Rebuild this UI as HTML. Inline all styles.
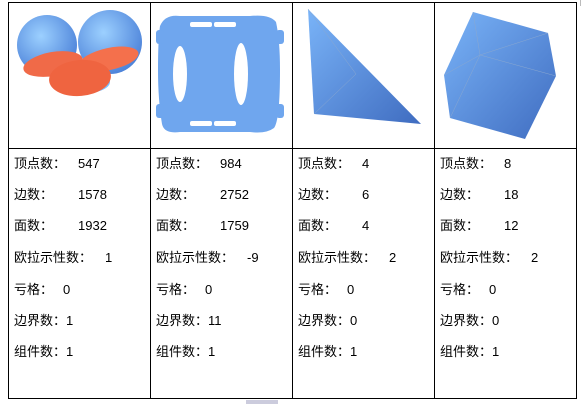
<!DOCTYPE html><html><head><meta charset="utf-8"><style>
body{margin:0;width:581px;height:404px;background:#fff;position:relative;overflow:hidden;font-family:"Liberation Sans","Noto Sans CJK SC",sans-serif;font-size:13px;color:#000}
.l{position:absolute;background:#000}
.t{position:absolute;white-space:nowrap;line-height:14px}
</style></head><body>
<div class="l" style="left:8px;top:2px;width:569px;height:1px"></div>
<div class="l" style="left:8px;top:148px;width:569px;height:1px"></div>
<div class="l" style="left:8px;top:398px;width:569px;height:1px"></div>
<div class="l" style="left:8px;top:2px;width:1px;height:397px"></div>
<div class="l" style="left:150px;top:2px;width:1px;height:397px"></div>
<div class="l" style="left:292px;top:2px;width:1px;height:397px"></div>
<div class="l" style="left:434px;top:2px;width:1px;height:397px"></div>
<div class="l" style="left:576px;top:2px;width:1px;height:397px"></div>
<div style="position:absolute;left:580px;top:0;width:1px;height:6px;background:#bbb"></div>
<div style="position:absolute;left:246px;top:400px;width:32px;height:4px;background:#ccd"></div>
<svg width="581" height="148" style="position:absolute;left:0;top:0">
<defs>
<radialGradient id="b" cx="40%" cy="35%" r="70%"><stop offset="0" stop-color="#9cd0ff"/><stop offset="1" stop-color="#4a80d8"/></radialGradient>
<linearGradient id="p" x1="0" y1="0" x2="1" y2="1"><stop offset="0" stop-color="#7ab4f8"/><stop offset="1" stop-color="#3f6cc0"/></linearGradient>
</defs>
<circle cx="47" cy="45" r="30" fill="url(#b)"/><circle cx="110" cy="42" r="32" fill="url(#b)"/>
<ellipse cx="80" cy="82" rx="30" ry="12" fill="#7cc0ff"/>
<ellipse cx="53" cy="64" rx="30" ry="12" fill="#f06a48" transform="rotate(-10 53 64)"/>
<ellipse cx="109" cy="59" rx="30" ry="11" fill="#f4704c" transform="rotate(-12 109 59)"/>
<ellipse cx="80" cy="78" rx="31" ry="18" fill="#ef6440" transform="rotate(-5 80 78)"/>
<path d="M160 26 Q165 14 180 16 L250 16 Q270 14 276 22 Q280 40 280 70 Q280 120 274 128 Q266 134 250 132 L180 132 Q164 134 162 124 Q158 100 158 70 Q158 40 160 26Z" fill="#6fa6ee"/>
<rect x="156" y="30" width="8" height="14" rx="3" fill="#6fa6ee"/><rect x="156" y="104" width="8" height="14" rx="3" fill="#6fa6ee"/>
<rect x="276" y="30" width="8" height="14" rx="3" fill="#6fa6ee"/><rect x="276" y="104" width="8" height="14" rx="3" fill="#6fa6ee"/>
<ellipse cx="180" cy="74" rx="7" ry="28" fill="#fff"/><ellipse cx="241" cy="74" rx="7" ry="31" fill="#fff"/>
<rect x="190" y="22" width="22" height="5" rx="2" fill="#fff"/><rect x="214" y="22" width="22" height="5" rx="2" fill="#fff"/>
<rect x="190" y="121" width="22" height="5" rx="2" fill="#fff"/><rect x="214" y="121" width="22" height="5" rx="2" fill="#fff"/>
<polygon points="308,9 421,124 314,114" fill="url(#p)"/>
<polygon points="473,12 548,33 556,76 525,139 450,118 444,75" fill="url(#p)"/>
<g stroke="#8aa8d0" stroke-width="0.5" fill="none"><path d="M480 55 L473 12 M480 55 L548 33 M480 55 L556 76 M480 55 L450 118 M480 55 L444 75"/><path d="M356 74 L314 114 M356 74 L308 9"/></g>
</svg>
<div class="t" style="left:14px;top:157px">顶点数：</div><div class="t" style="left:78px;top:157px">547</div>
<div class="t" style="left:14px;top:188px">边数：</div><div class="t" style="left:78px;top:188px">1578</div>
<div class="t" style="left:14px;top:219px">面数：</div><div class="t" style="left:78px;top:219px">1932</div>
<div class="t" style="left:14px;top:251px">欧拉示性数：</div><div class="t" style="left:105px;top:251px">1</div>
<div class="t" style="left:14px;top:283px">亏格：</div><div class="t" style="left:63px;top:283px">0</div>
<div class="t" style="left:14px;top:314px">边界数：1</div>
<div class="t" style="left:14px;top:345px">组件数：1</div>

<div class="t" style="left:156px;top:157px">顶点数：</div><div class="t" style="left:220px;top:157px">984</div>
<div class="t" style="left:156px;top:188px">边数：</div><div class="t" style="left:220px;top:188px">2752</div>
<div class="t" style="left:156px;top:219px">面数：</div><div class="t" style="left:220px;top:219px">1759</div>
<div class="t" style="left:156px;top:251px">欧拉示性数：</div><div class="t" style="left:247px;top:251px">-9</div>
<div class="t" style="left:156px;top:283px">亏格：</div><div class="t" style="left:205px;top:283px">0</div>
<div class="t" style="left:156px;top:314px">边界数：11</div>
<div class="t" style="left:156px;top:345px">组件数：1</div>

<div class="t" style="left:298px;top:157px">顶点数：</div><div class="t" style="left:362px;top:157px">4</div>
<div class="t" style="left:298px;top:188px">边数：</div><div class="t" style="left:362px;top:188px">6</div>
<div class="t" style="left:298px;top:219px">面数：</div><div class="t" style="left:362px;top:219px">4</div>
<div class="t" style="left:298px;top:251px">欧拉示性数：</div><div class="t" style="left:389px;top:251px">2</div>
<div class="t" style="left:298px;top:283px">亏格：</div><div class="t" style="left:347px;top:283px">0</div>
<div class="t" style="left:298px;top:314px">边界数：0</div>
<div class="t" style="left:298px;top:345px">组件数：1</div>

<div class="t" style="left:440px;top:157px">顶点数：</div><div class="t" style="left:504px;top:157px">8</div>
<div class="t" style="left:440px;top:188px">边数：</div><div class="t" style="left:504px;top:188px">18</div>
<div class="t" style="left:440px;top:219px">面数：</div><div class="t" style="left:504px;top:219px">12</div>
<div class="t" style="left:440px;top:251px">欧拉示性数：</div><div class="t" style="left:531px;top:251px">2</div>
<div class="t" style="left:440px;top:283px">亏格：</div><div class="t" style="left:489px;top:283px">0</div>
<div class="t" style="left:440px;top:314px">边界数：0</div>
<div class="t" style="left:440px;top:345px">组件数：1</div>
</body></html>
